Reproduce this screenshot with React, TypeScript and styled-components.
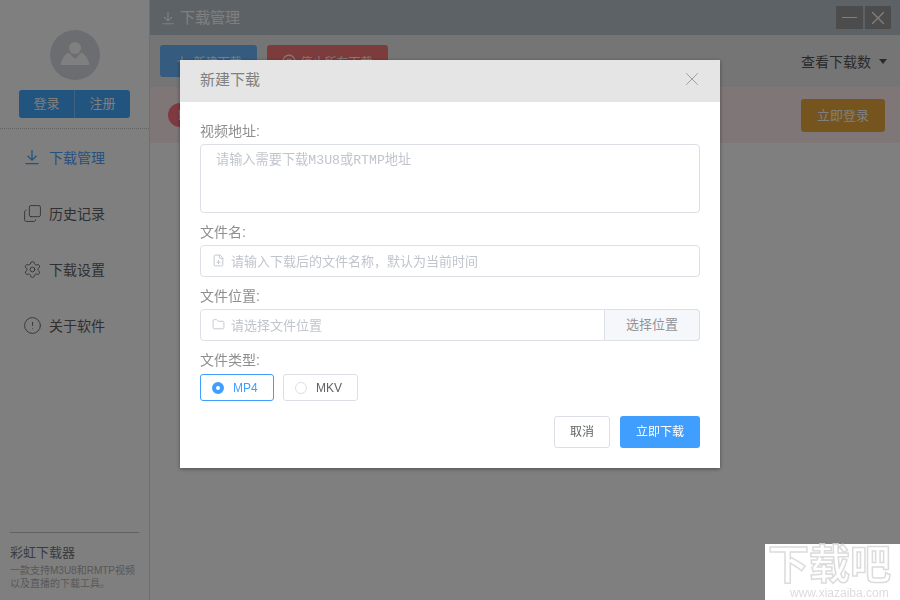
import React from "react";
import styled, { createGlobalStyle } from "styled-components";
import { CircleAlert, CircleStop, Copy, FilePlus, Folder, Plus, Settings, X } from "lucide-react";

const DownloadIcon = ({ size = 16 }: { size?: number }) => (
  <svg width={size} height={size} viewBox="0 0 16 16" fill="none" stroke="currentColor" strokeWidth="1.3">
    <path d="M8 1v10M3.500 6.800 8 11.200l4.500-4.400M1.500 14.600h13" />
  </svg>
);

const UserIcon = () => (
  <svg width="30" height="30" viewBox="0 0 30 30" fill="#fff">
    <circle cx="15" cy="8" r="6" />
    <path d="M8.500 12.500 15 19l6.500-6.500C25 14 28.500 19 29.500 25H.5C1.500 19 5 14 8.500 12.500z" />
  </svg>
);

const HistoryIcon = styled(Copy)`
  transform: scaleY(-1);
`;

const menu = [
  { label: "下载管理", icon: <DownloadIcon />, active: true },
  { label: "历史记录", icon: <HistoryIcon size={19} strokeWidth={1.1} /> },
  { label: "下载设置", icon: <Settings size={19} strokeWidth={1.1} /> },
  { label: "关于软件", icon: <CircleAlert size={19} strokeWidth={1.1} /> },
];

const App = () => {
  return (
    <>
      <GlobalStyle />
      <Page>
        <Sidebar>
          <Profile>
            <Avatar><UserIcon /></Avatar>
            <AuthGroup>
              <AuthButton>登录</AuthButton>
              <AuthButton>注册</AuthButton>
            </AuthGroup>
          </Profile>
          <Menu>
            {menu.map(item => (
              <MenuItem key={item.label} $active={item.active}>
                <MenuIcon>{item.icon}</MenuIcon>
                {item.label}
              </MenuItem>
            ))}
          </Menu>
          <About>
            <AboutTitle>彩虹下载器</AboutTitle>
            <AboutText>一款支持M3U8和RMTP视频</AboutText>
            <AboutText>以及直播的下载工具。</AboutText>
          </About>
        </Sidebar>
        <Main>
          <Header>
            <HeaderTitle><DownloadIcon size={14} />下载管理</HeaderTitle>
            <WindowButtons>
              <WindowButton><MinimizeBar /></WindowButton>
              <WindowButton><X size={22} strokeWidth={1.4} /></WindowButton>
            </WindowButtons>
          </Header>
          <Toolbar>
            <ToolButton $color="#6ab8ff" $width={97}><Plus size={14} />新建下载</ToolButton>
            <ToolButton $color="#fa7878" $width={121}><CircleStop size={14} />停止所有下载</ToolButton>
            <CountSelect>查看下载数<Caret /></CountSelect>
          </Toolbar>
          <Alert>
            <AlertDot>!</AlertDot>
            <LoginButton>立即登录</LoginButton>
          </Alert>
        </Main>
      </Page>
      <Overlay>
        <Modal>
          <ModalHeader>
            新建下载
            <CloseButton><X size={22} strokeWidth={1} /></CloseButton>
          </ModalHeader>
          <ModalBody>
            <Label>视频地址:</Label>
            <UrlArea placeholder="请输入需要下载M3U8或RTMP地址" />
            <Label>文件名:</Label>
            <InputWrap>
              <InputIcon><FilePlus size={13} strokeWidth={1.7} /></InputIcon>
              <TextInput placeholder="请输入下载后的文件名称，默认为当前时间" />
            </InputWrap>
            <Label>文件位置:</Label>
            <InputWrap>
              <InputIcon><Folder size={13} strokeWidth={1.7} /></InputIcon>
              <TextInput $append placeholder="请选择文件位置" />
              <Append>选择位置</Append>
            </InputWrap>
            <Label>文件类型:</Label>
            <RadioRow>
              <Radio $checked><RadioDot $checked />MP4</Radio>
              <Radio><RadioDot />MKV</Radio>
            </RadioRow>
            <Footer>
              <CancelButton>取消</CancelButton>
              <SubmitButton>立即下载</SubmitButton>
            </Footer>
          </ModalBody>
        </Modal>
      </Overlay>
      <Watermark>
        <WatermarkName>下载吧</WatermarkName>
        <WatermarkUrl>www.xiazaiba.com</WatermarkUrl>
      </Watermark>
    </>
  );
};

const GlobalStyle = createGlobalStyle`
  html, body {
    margin: 0;
    height: 100%;
    overflow: hidden;
  }

  body {
    background: #fff;
    font-family: "Liberation Sans", "Noto Sans CJK SC", sans-serif;
    font-size: 14px;
  }

  * {
    box-sizing: border-box;
  }
`;

const Page = styled.div`
  display: flex;
  width: 900px;
  height: 600px;
`;

const Sidebar = styled.aside`
  display: flex;
  flex-direction: column;
  width: 150px;
  border-right: 1px solid #dedede;
  background: #fff;
`;

const Profile = styled.div`
  display: flex;
  flex-direction: column;
  align-items: center;
  gap: 10px;
  height: 129px;
  padding-top: 30px;
  border-bottom: 1px dotted #c8c8c8;
`;

const Avatar = styled.div`
  display: flex;
  align-items: center;
  justify-content: center;
  width: 50px;
  height: 50px;
  border-radius: 50%;
  background: #d6dbe0;
`;

const AuthGroup = styled.div`
  display: flex;
  width: 111px;
  height: 28px;
  border-radius: 3px;
  overflow: hidden;
`;

const AuthButton = styled.div`
  flex: 1;
  line-height: 28px;
  text-align: center;
  font-size: 13px;
  color: #fff;
  background: #42a8ff;

  & + & {
    border-left: 1px solid #7cc2ff;
  }
`;

const Menu = styled.nav`
  display: flex;
  flex-direction: column;
`;

const MenuItem = styled.div<{ $active?: boolean }>`
  display: flex;
  align-items: center;
  gap: 7px;
  height: 56px;
  padding-left: 22px;
  color: ${p => (p.$active ? "#4fa0ff" : "#606060")};
`;

const MenuIcon = styled.span`
  display: flex;
  width: 20px;
  justify-content: center;
`;

const About = styled.div`
  margin: auto 10px 0;
  padding: 11px 0 10px;
  border-top: 1px solid #c4c4c4;
`;

const AboutTitle = styled.div`
  margin-bottom: 2px;
  font-size: 13px;
  line-height: 18px;
  color: #777;
`;

const AboutText = styled.div`
  font-size: 10px;
  line-height: 13px;
  color: #b0b0b0;
`;

const Main = styled.main`
  flex: 1;
  display: flex;
  flex-direction: column;
`;

const Header = styled.header`
  display: flex;
  align-items: flex-start;
  justify-content: space-between;
  height: 35px;
  padding: 6px 9px 0 11px;
  background: #bbc5ce;
`;

const HeaderTitle = styled.div`
  display: flex;
  align-items: center;
  gap: 5px;
  margin-top: 2px;
  font-size: 15px;
  line-height: 20px;
  color: #fff;
`;

const WindowButtons = styled.div`
  display: flex;
  gap: 2px;
`;

const WindowButton = styled.div`
  display: flex;
  align-items: center;
  justify-content: center;
  width: 27px;
  height: 23px;
  color: #fff;
  background: #999;

  & + & {
    width: 26px;
  }
`;

const MinimizeBar = styled.span`
  width: 15px;
  height: 1px;
  background: #fff;
`;

const Toolbar = styled.div`
  display: flex;
  align-items: center;
  gap: 10px;
  height: 52px;
  padding: 0 13px 0 10px;
  background: #ebebeb;
`;

const ToolButton = styled.div<{ $color: string; $width: number }>`
  display: flex;
  align-items: center;
  justify-content: center;
  gap: 4px;
  width: ${p => p.$width}px;
  height: 32px;
  border-radius: 3px;
  font-size: 12px;
  color: #fff;
  background: ${p => p.$color};
`;

const CountSelect = styled.div`
  display: flex;
  align-items: center;
  gap: 8px;
  margin-left: auto;
  color: #555;
`;

const Caret = styled.span`
  border-left: 4px solid transparent;
  border-right: 4px solid transparent;
  border-top: 5px solid #555;
`;

const Alert = styled.div`
  display: flex;
  align-items: center;
  justify-content: space-between;
  height: 56px;
  padding: 0 15px 0 18px;
  background: #ffeeee;
`;

const AlertDot = styled.span`
  width: 24px;
  height: 24px;
  border-radius: 50%;
  line-height: 24px;
  text-align: center;
  font-weight: 700;
  color: #fff;
  background: #ff7480;
`;

const LoginButton = styled.div`
  width: 84px;
  height: 33px;
  border-radius: 3px;
  line-height: 33px;
  text-align: center;
  font-size: 13px;
  color: #fff;
  background: #eca83c;
`;

const Overlay = styled.div`
  position: fixed;
  inset: 0;
  display: flex;
  justify-content: center;
  align-items: flex-start;
  padding-top: 60px;
  background: rgba(0, 0, 0, 0.5);
`;

const Modal = styled.div`
  width: 540px;
  background: #fff;
  box-shadow: 0 1px 4px rgba(0, 0, 0, 0.4);
`;

const ModalHeader = styled.div`
  position: relative;
  height: 42px;
  padding-left: 20px;
  line-height: 40px;
  font-size: 15px;
  color: #808080;
  background: #e5e5e5;
`;

const CloseButton = styled.span`
  position: absolute;
  top: 8px;
  right: 17px;
  display: flex;
  color: #999;
`;

const ModalBody = styled.div`
  display: flex;
  flex-direction: column;
  padding: 19px 20px 20px;
`;

const Label = styled.div`
  height: 23px;
  line-height: 20px;
  font-size: 14px;
  color: #8f8f8f;
`;

const UrlArea = styled.textarea`
  display: block;
  height: 69px;
  margin-bottom: 9px;
  padding: 4px 15px;
  border: 1px solid #dcdfe6;
  border-radius: 4px;
  outline: none;
  resize: none;
  font-family: "Liberation Mono", "Noto Sans CJK SC", monospace;
  font-size: 13.2px;

  &::placeholder {
    color: #c0c4cc;
  }
`;

const InputWrap = styled.div`
  position: relative;
  display: flex;
  height: 32px;
  margin-bottom: 9px;
`;

const InputIcon = styled.span`
  position: absolute;
  top: 9px;
  left: 12px;
  display: flex;
  color: #c0c4cc;
`;

const TextInput = styled.input<{ $append?: boolean }>`
  flex: 1;
  min-width: 0;
  padding: 0 15px 0 30px;
  border: 1px solid #dcdfe6;
  border-radius: ${p => (p.$append ? "4px 0 0 4px" : "4px")};
  outline: none;
  font-family: inherit;
  font-size: 13px;

  &::placeholder {
    color: #c0c4cc;
  }
`;

const Append = styled.div`
  width: 95px;
  border: 1px solid #dcdfe6;
  border-left: none;
  border-radius: 0 4px 4px 0;
  line-height: 30px;
  text-align: center;
  font-size: 13px;
  color: #909399;
  background: #f5f7fa;
`;

const RadioRow = styled.div`
  display: flex;
  gap: 9px;
  margin-top: 1px;
`;

const Radio = styled.div<{ $checked?: boolean }>`
  display: flex;
  align-items: center;
  gap: 9px;
  width: ${p => (p.$checked ? "74px" : "75px")};
  height: 27px;
  padding-left: 11px;
  border: 1px solid ${p => (p.$checked ? "#409eff" : "#dcdfe6")};
  border-radius: 3px;
  font-size: 12px;
  color: ${p => (p.$checked ? "#409eff" : "#606266")};
`;

const RadioDot = styled.span<{ $checked?: boolean }>`
  width: 12px;
  height: 12px;
  border-radius: 50%;
  border: ${p => (p.$checked ? "4px solid #409eff" : "1px solid #dcdfe6")};
  background: #fff;
`;

const Footer = styled.div`
  display: flex;
  justify-content: flex-end;
  gap: 10px;
  margin-top: 15px;
`;

const CancelButton = styled.div`
  width: 56px;
  height: 32px;
  border: 1px solid #dcdfe6;
  border-radius: 3px;
  line-height: 30px;
  text-align: center;
  font-size: 12px;
  color: #606266;
`;

const SubmitButton = styled.div`
  width: 80px;
  height: 32px;
  border-radius: 3px;
  line-height: 32px;
  text-align: center;
  font-size: 12px;
  color: #fff;
  background: #409eff;
`;

const Watermark = styled.div`
  position: fixed;
  right: 0;
  bottom: 0;
  display: flex;
  flex-direction: column;
  width: 135px;
  height: 56px;
  padding-left: 3px;
  background: #fff;
`;

const WatermarkName = styled.div`
  height: 43px;
  line-height: 43px;
  font-size: 41px;
  font-weight: 700;
  white-space: nowrap;
  color: #fff;
  -webkit-text-stroke: 1.5px #dcdcdc;
`;

const WatermarkUrl = styled.div`
  padding-left: 22px;
  line-height: 13px;
  font-size: 12px;
  color: #dcdcdc;
`;

export default App;
